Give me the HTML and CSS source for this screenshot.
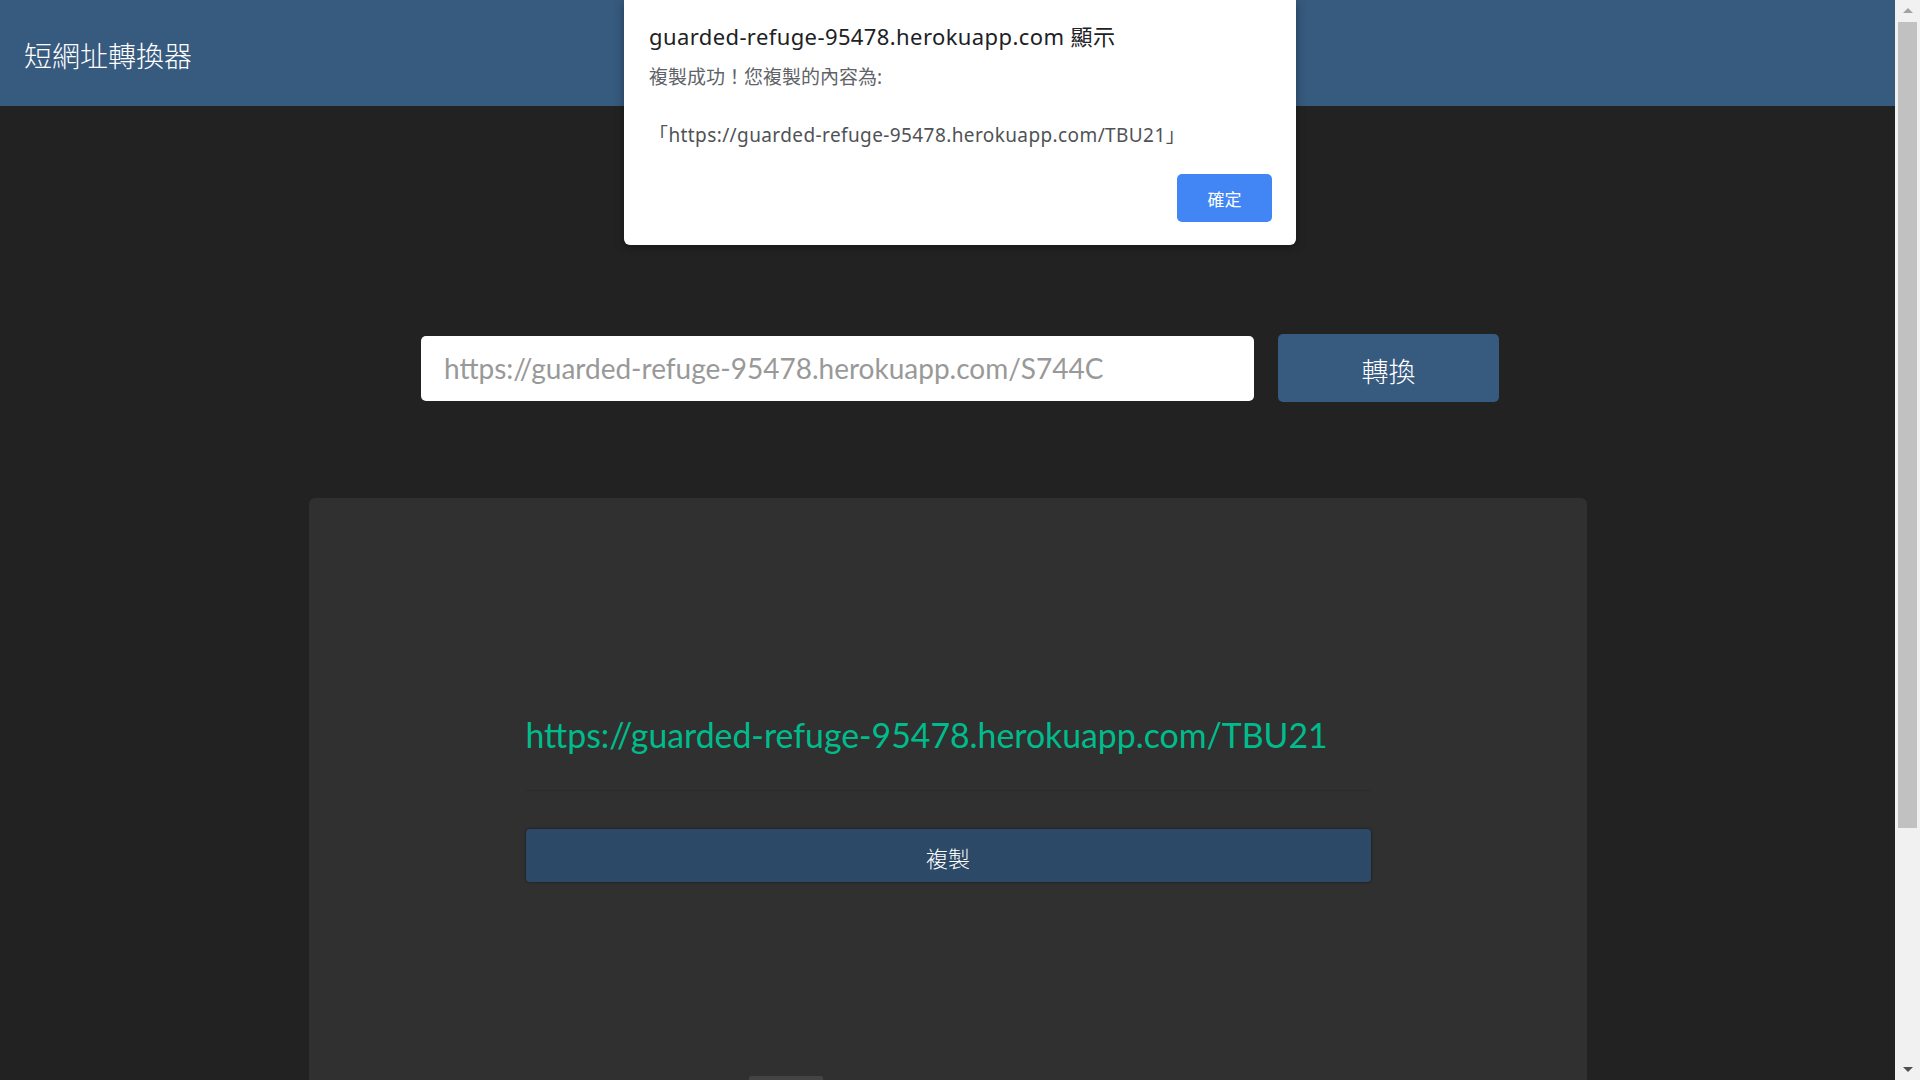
FILE: index.html
```html
<!DOCTYPE html>
<html lang="zh-Hant">
<head>
<meta charset="utf-8">
<title>短網址轉換器</title>
<link rel="stylesheet" href="styles.css">
</head>
<body>
<div class="viewport">
  <div class="page">
    <header class="navbar">
      <span class="brand">短網址轉換器</span>
    </header>
    <main class="content">
      <form class="convert-row">
        <input class="url-input" type="text" placeholder="https://guarded-refuge-95478.herokuapp.com/S744C">
        <button class="btn-convert" type="button">轉換</button>
      </form>
      <section class="result-card">
        <div class="result-inner">
          <a class="short-link" href="#">https://guarded-refuge-95478.herokuapp.com/TBU21</a>
          <hr class="divider">
          <button class="btn-copy" type="button">複製</button>
          <div class="stub"></div>
        </div>
      </section>
    </main>
  </div>
  <div class="scrollbar">
    <div class="sb-arrow sb-up"></div>
    <div class="sb-track"><div class="sb-thumb"></div></div>
    <div class="sb-arrow sb-down"></div>
  </div>
</div>

<div class="alert-dialog">
  <div class="alert-title">guarded-refuge-95478.herokuapp.com 顯示</div>
  <div class="alert-message">
    <div class="alert-line">複製成功！您複製的內容為:</div>
    <div class="alert-line">&nbsp;</div>
    <div class="alert-line alert-url">「https://guarded-refuge-95478.herokuapp.com/TBU21」</div>
  </div>
  <div class="alert-actions">
    <button class="alert-ok" type="button">確定</button>
  </div>
</div>
</body>
</html>
```

FILE: styles.css
```css
html, body {
  margin: 0;
  padding: 0;
  height: 1080px;
  overflow: hidden;
  background: #222222;
  font-family: "Lato", "Noto Sans CJK TC", sans-serif;
}

.viewport {
  display: flex;
  height: 1080px;
}

.page {
  flex: 1;
  overflow: hidden;
  min-width: 0;
}

.navbar {
  height: 106px;
  background: #375a7f;
  display: flex;
  align-items: center;
  padding-left: 24px;
  box-sizing: border-box;
}

.brand {
  color: #ffffff;
  font-family: "Noto Sans CJK TC", sans-serif;
  font-size: 28px;
  font-weight: 300;
  line-height: 1;
  padding-top: 4px;
}

.convert-row {
  display: flex;
  align-items: center;
  gap: 24px;
  margin: 228px 0 0 421px;
}

.url-input {
  width: 833px;
  height: 65px;
  box-sizing: border-box;
  border: none;
  border-radius: 5px;
  background: #ffffff;
  padding: 0 23px;
  font-family: "Lato", "Noto Sans CJK TC", sans-serif;
  font-size: 28px;
  color: #444;
  outline: none;
}

.url-input::placeholder {
  color: #999999;
}

.btn-convert {
  width: 221px;
  height: 68px;
  border: none;
  border-radius: 5px;
  background: #375a7f;
  color: #ffffff;
  font-family: "Noto Sans CJK TC", sans-serif;
  font-size: 27px;
  font-weight: 300;
  padding: 4px 0 0;
}

.result-card {
  margin: 96px 0 0 309px;
  width: 1278px;
  height: 700px;
  background: #303030;
  border-radius: 6px;
}

.result-inner {
  width: 845px;
  margin: 0 auto;
  padding-top: 217px;
  display: flex;
  flex-direction: column;
}

.short-link {
  display: block;
  color: #00bc8c;
  text-decoration: none;
  font-family: "Lato", sans-serif;
  font-size: 33.8px;
  line-height: 40px;
}

.divider {
  margin: 35px 0 0;
  border: none;
  border-top: 1px solid #2a2a2a;
  height: 0;
}

.btn-copy {
  margin-top: 38px;
  width: 100%;
  height: 53px;
  border: none;
  border-radius: 4px;
  background: #2c4968;
  box-shadow: 0 0 2px 1px rgba(0, 0, 0, 0.25);
  color: #ffffff;
  font-family: "Noto Sans CJK TC", sans-serif;
  font-size: 22px;
  font-weight: 300;
  padding: 2px 0 0;
}

.stub {
  margin: 194px 0 0 223px;
  width: 74px;
  height: 10px;
  background: #444444;
  border-radius: 2px;
}

/* scrollbar */
.scrollbar {
  width: 25px;
  flex: 0 0 25px;
  background: #f1f1f1;
  display: flex;
  flex-direction: column;
  align-items: center;
}

.sb-arrow {
  width: 0;
  height: 0;
  border-left: 5px solid transparent;
  border-right: 5px solid transparent;
}

.sb-up {
  margin-top: 8px;
  border-bottom: 5px solid #a3a3a3;
}

.sb-down {
  margin-bottom: 8px;
  border-top: 5px solid #505050;
}

.sb-track {
  flex: 1;
  width: 100%;
  padding: 9px 3px 0;
  box-sizing: border-box;
}

.sb-thumb {
  height: 806px;
  background: #c1c1c1;
}

/* alert dialog */
.alert-dialog {
  position: absolute;
  top: 0;
  left: 624px;
  width: 672px;
  height: 245px;
  box-sizing: border-box;
  background: #ffffff;
  border-radius: 0 0 6px 6px;
  box-shadow: 0 2px 10px rgba(0, 0, 0, 0.35);
  padding: 24px 24px 0 25px;
  font-family: "Noto Sans", "Noto Sans CJK TC", sans-serif;
}

.alert-title {
  font-size: 22px;
  line-height: 24px;
  color: #202124;
  letter-spacing: 0.4px;
}

.alert-message {
  margin-top: 15px;
  font-size: 19px;
  line-height: 29px;
  color: #5f6368;
}

.alert-url {
  color: #505256;
  letter-spacing: 0.4px;
}

.alert-actions {
  display: flex;
  justify-content: flex-end;
  margin-top: 24px;
}

.alert-ok {
  width: 95px;
  height: 48px;
  border: none;
  border-radius: 5px;
  background: #4285f4;
  color: #ffffff;
  font-family: "Noto Sans CJK TC", sans-serif;
  font-size: 17px;
}
```
